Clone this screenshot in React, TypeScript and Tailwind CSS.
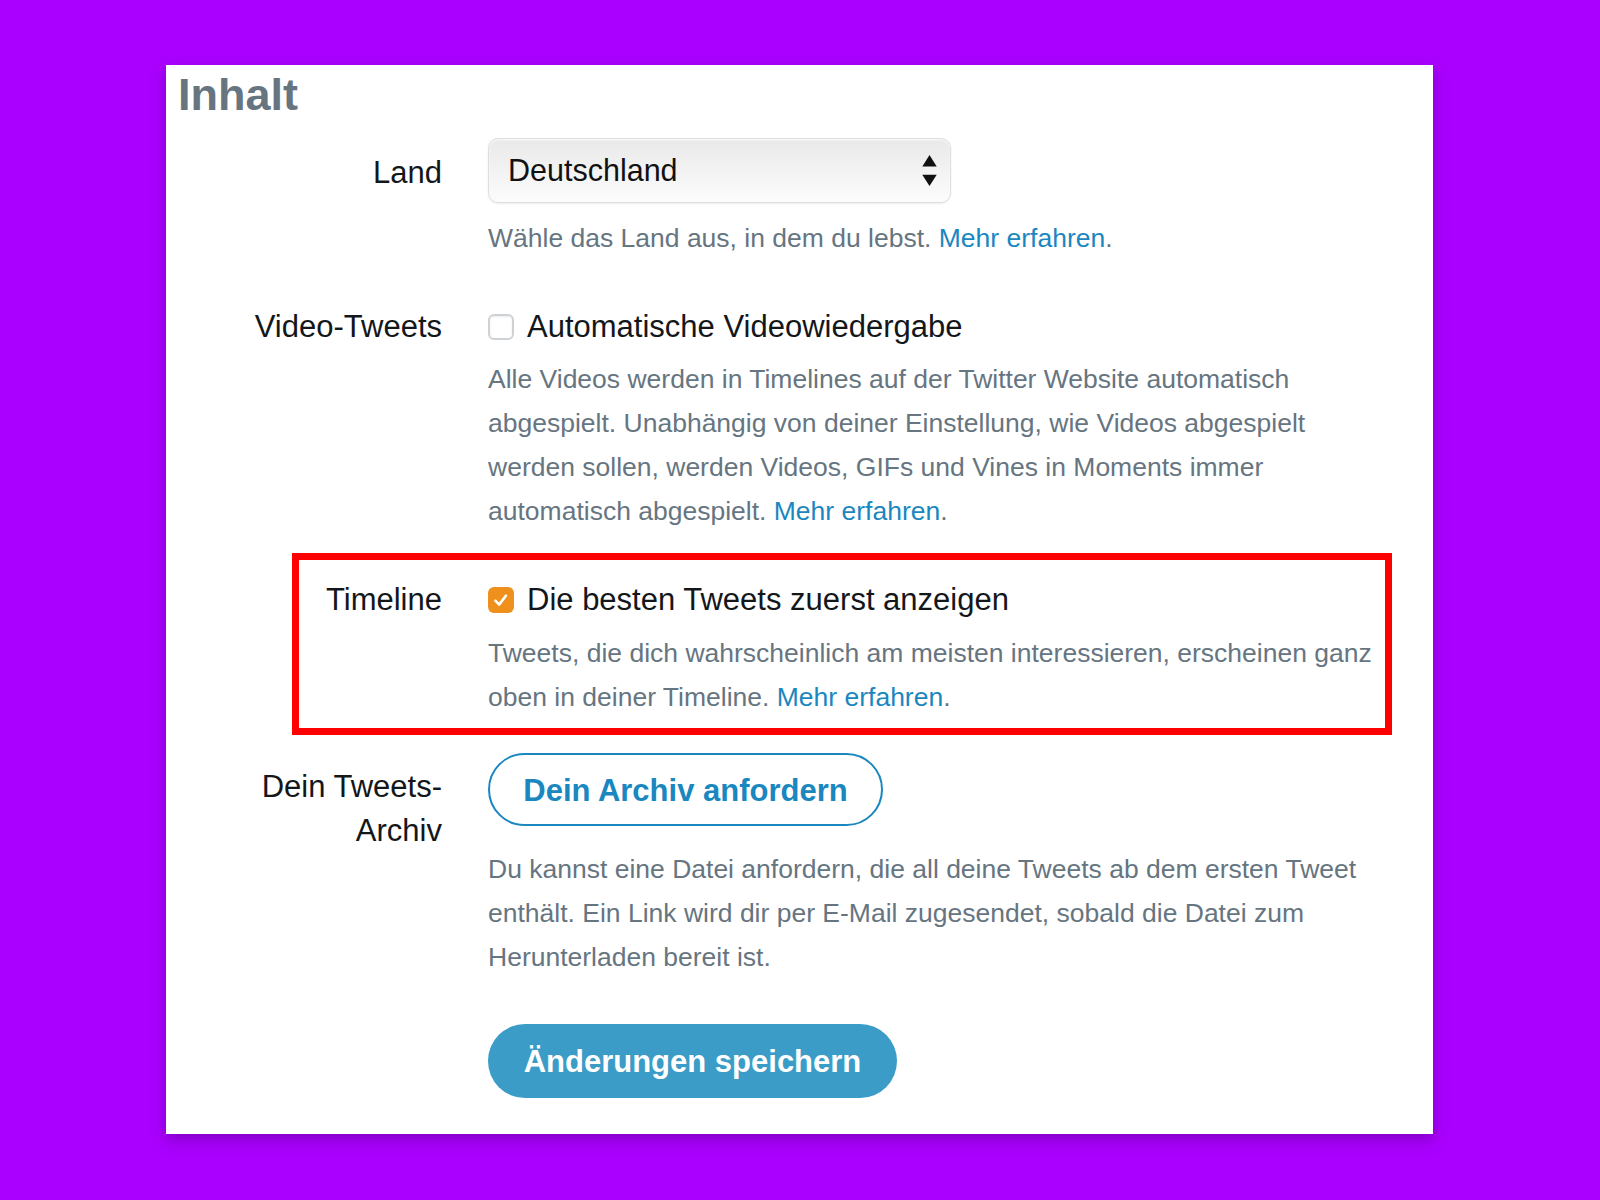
import React from 'react'

const link = 'text-[#1a87bf]'

function Label({ children, className = '' }: { children: React.ReactNode; className?: string }) {
    return <div className={`shrink-0 text-right text-[31px] leading-[44px] text-[#14171a] ${className}`}>{children}</div>
}

function Help({ children, className = '' }: { children: React.ReactNode; className?: string }) {
    return <p className={`text-[26.5px] leading-[44px] text-[#66757f] whitespace-nowrap ${className}`}>{children}</p>
}

function Check({ checked }: { checked?: boolean }) {
    if (checked) {
        return (
            <span className="flex h-[26px] w-[26px] items-center justify-center rounded-[6px] bg-[#ef901d]">
                <svg className="h-[20px] w-[20px]" viewBox="0 0 16 16" fill="none" stroke="white" strokeWidth={2} strokeLinecap="round" strokeLinejoin="round">
                    <path d="M3.5 8.5l3 3.2 5.5-7.2" />
                </svg>
            </span>
        )
    }
    return <span className="h-[26px] w-[26px] rounded-[6px] border-2 border-[#cfd2d4] bg-white shadow-[inset_0_1px_2px_rgba(0,0,0,0.08)]" />
}

export default function App() {
    return (
        <div className="h-[1200px] w-full bg-[#aa00ff] pt-[65px] font-['Liberation_Sans',Arial,sans-serif]">
            <div className="ml-[166px] w-[1267px] bg-white pt-[7px] pb-[36px] shadow-[0_6px_14px_rgba(60,0,90,0.35)]">
                <h1 className="pl-[12px] text-[45px] font-bold leading-[45px] text-[#66757f]">Inhalt</h1>

                {/* Land */}
                <div className="mt-[21px] flex gap-[46px]">
                    <Label className="w-[276px] pt-[13px]">Land</Label>
                    <div>
                        <div className="relative flex h-[65px] w-[463px] items-center rounded-[10px] border border-[#dcdfe1] bg-gradient-to-b from-[#e9e9e9] to-[#fcfcfc] pl-[19px] shadow-[inset_0_1px_2px_rgba(255,255,255,0.9),0_1px_2px_rgba(0,0,0,0.08)]">
                            <span className="text-[30.5px] text-[#111]">Deutschland</span>
                            <svg className="absolute right-[12px] top-[15px] h-[33px] w-[17px]" viewBox="0 0 16 32" fill="#111">
                                <path d="M8 1l7 11H1z" />
                                <path d="M8 31l7-11H1z" />
                            </svg>
                        </div>
                        <Help className="mt-[13px]">
                            Wähle das Land aus, in dem du lebst. <span className={link}>Mehr erfahren</span>.
                        </Help>
                    </div>
                </div>

                {/* Video-Tweets */}
                <div className="mt-[45px] flex gap-[46px]">
                    <Label className="w-[276px]">Video-Tweets</Label>
                    <div>
                        <div className="flex h-[44px] items-center gap-[13px]">
                            <Check />
                            <span className="text-[31px] text-[#14171a]">Automatische Videowiedergabe</span>
                        </div>
                        <Help className="mt-[8px]">
                            Alle Videos werden in Timelines auf der Twitter Website automatisch
                            <br />
                            abgespielt. Unabhängig von deiner Einstellung, wie Videos abgespielt
                            <br />
                            werden sollen, werden Videos, GIFs und Vines in Moments immer
                            <br />
                            automatisch abgespielt. <span className={link}>Mehr erfahren</span>.
                        </Help>
                    </div>
                </div>

                {/* Timeline, annotated */}
                <div className="ml-[126px] mt-[20px] flex w-[1100px] gap-[46px] border-[7px] border-[#ff0000] pt-[18px] pb-[9px]">
                    <Label className="w-[143px]">Timeline</Label>
                    <div>
                        <div className="flex h-[44px] items-center gap-[13px]">
                            <Check checked />
                            <span className="text-[31px] text-[#14171a]">Die besten Tweets zuerst anzeigen</span>
                        </div>
                        <Help className="mt-[9px]">
                            Tweets, die dich wahrscheinlich am meisten interessieren, erscheinen ganz
                            <br />
                            oben in deiner Timeline. <span className={link}>Mehr erfahren</span>.
                        </Help>
                    </div>
                </div>

                {/* Archiv */}
                <div className="mt-[18px] flex gap-[46px]">
                    <Label className="w-[276px] pt-[12px]">
                        Dein Tweets-
                        <br />
                        Archiv
                    </Label>
                    <div>
                        <button className="h-[73px] w-[395px] rounded-full border-2 border-[#1a87bf] bg-white pt-[4px] text-[31px] font-bold text-[#1a87bf]">
                            Dein Archiv anfordern
                        </button>
                        <Help className="mt-[21px]">
                            Du kannst eine Datei anfordern, die all deine Tweets ab dem ersten Tweet
                            <br />
                            enthält. Ein Link wird dir per E-Mail zugesendet, sobald die Datei zum
                            <br />
                            Herunterladen bereit ist.
                        </Help>
                        <button className="mt-[45px] h-[74px] w-[409px] rounded-full bg-[#3a9cc7] pt-[3px] text-[31px] font-bold text-white">
                            Änderungen speichern
                        </button>
                    </div>
                </div>
            </div>
        </div>
    )
}
